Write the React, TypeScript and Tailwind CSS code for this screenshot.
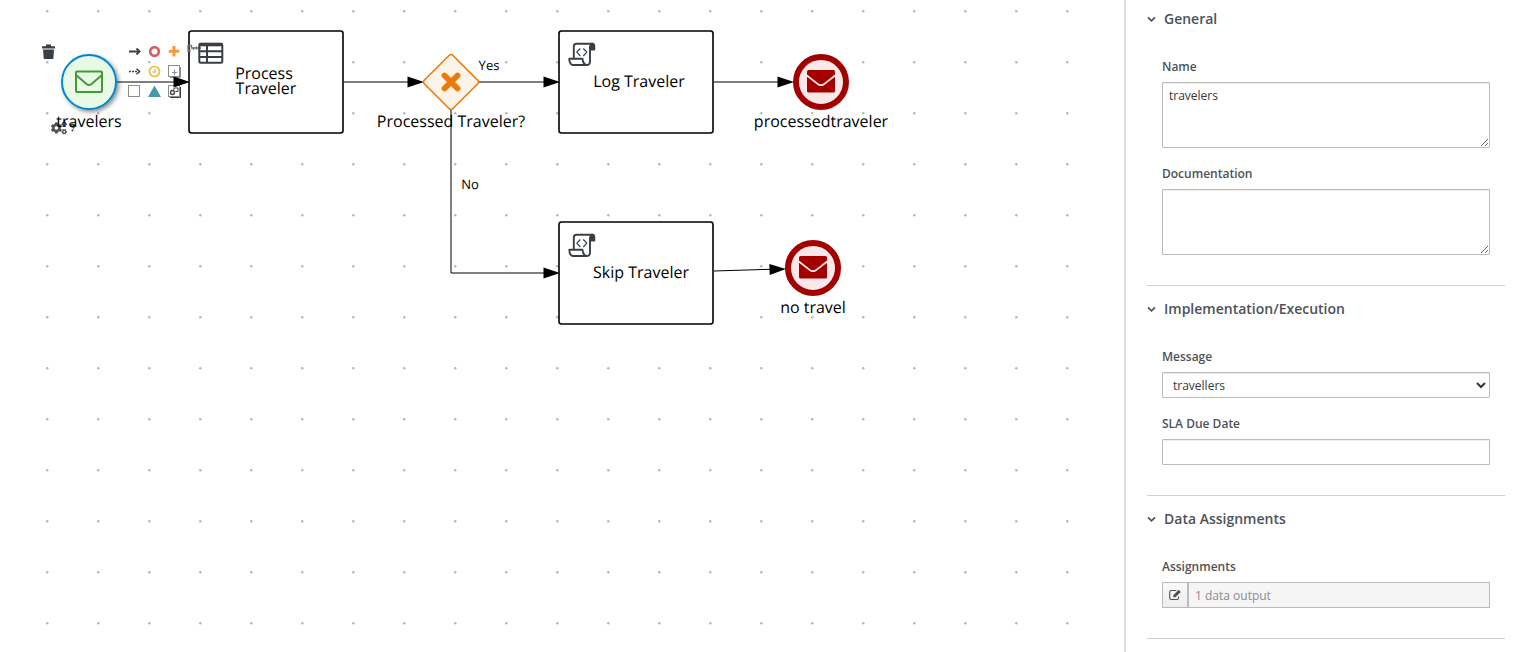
import { useId, type ReactNode } from "react";
import { FaCogs } from "react-icons/fa";

const label = "font-['Open_Sans',sans-serif]";

function Grid() {
  return (
    <>
      <defs>
        <pattern id="grid" x="21" y="-14" width="51" height="51" patternUnits="userSpaceOnUse">
          <circle cx="26.300" cy="25.300" r="1.200" fill="#b4b4b4" />
        </pattern>
        <filter id="shadow" x="-30%" y="-30%" width="170%" height="170%">
          <feDropShadow dx="2" dy="2" stdDeviation="2" floodColor="#000" floodOpacity="0.45" />
        </filter>
      </defs>
      <rect width="1100" height="100%" fill="url(#grid)" />
    </>
  );
}

function Arrow({ x, y, angle = 0 }: { x: number; y: number; angle?: number }) {
  return <path d="M0 0L-16.500 -5.500V5.500Z" transform={`translate(${x} ${y}) rotate(${angle})`} />;
}

function Task({ x, y, children }: { x: number; y: number; children: ReactNode }) {
  return (
    <g transform={`translate(${x} ${y})`}>
      <rect width="154" height="102" rx="2.500" fill="#fff" stroke="#000" strokeWidth="1.600" />
      {children}
    </g>
  );
}

function ScriptIcon() {
  return (
    <g fill="none" stroke="#393f44" strokeWidth="1.900" strokeLinejoin="round">
      <path d="M14.800 27.500V15.500Q14.800 12.700 17.500 12.700H34" />
      <path d="M31 15V30.500Q31 34 27.500 34H13.500Q10.300 33 10.300 27.800H23.500Q24 33 27.500 34" />
      <path d="M31.500 18.500V14.500Q31.500 12.700 33 12.700Q35.300 12.700 35.300 15V18.500Z" fill="#393f44" />
      <path d="M21.300 17.500L17.800 21.200L21.300 25M24.300 17.500L27.800 21.200L24.300 25" strokeWidth="1.200" />
    </g>
  );
}

function TableIcon() {
  return (
    <g fill="none" stroke="#393f44" strokeWidth="2">
      <rect x="10.300" y="12.700" width="23" height="19" rx="1.500" />
      <path d="M10 13.600H33.500" strokeWidth="3.400" />
      <path d="M10 20.200H33.500M10 26H33.500M18 14V32" />
    </g>
  );
}

function EndEvent({ x, y, name }: { x: number; y: number; name: string }) {
  return (
    <g transform={`translate(${x} ${y})`}>
      <circle r="25" fill="#fbe8e8" stroke="#a30000" strokeWidth="6" />
      <path d="M-14 -10.500Q-14 -12 -12.500 -12H12.500Q14 -12 14 -10.500V-7.500L2.500 1.500Q0 3 -2.500 1.500L-14 -7.500Z" fill="#a30000" />
      <path d="M-14 -5.300L-3 3.200Q0 5 3 3.200L14 -5.300V9Q14 10.500 12.500 10.500H-12.500Q-14 10.500 -14 9Z" fill="#a30000" />
      <text y="45" textAnchor="middle">{name}</text>
    </g>
  );
}

function ContextTools() {
  return (
    <g>
      <g fill="#393f44">
        <path d="M42 46.200H46V44.500H51V46.200H55V48.600H42Z" />
        <path d="M43 49.600H54L53.300 59H43.800Z" />
      </g>
      <g fill="#fff">
        <rect x="126" y="43" width="16" height="16" />
        <rect x="146" y="43" width="16" height="16" />
        <rect x="166" y="43" width="16" height="16" />
        <rect x="126" y="64" width="16" height="16" />
        <rect x="146" y="64" width="16" height="16" />
      </g>
      <g fill="none" stroke="#393f44" strokeWidth="2">
        <path d="M129 51.500H139" />
        <path d="M136.500 48.500L139.600 51.500L136.500 54.500" strokeWidth="1.800" />
        <path d="M129 71.500H138" strokeDasharray="2 1" strokeWidth="1.500" />
        <path d="M136.500 68.800L139.600 71.500L136.500 74.200" strokeWidth="1.500" />
      </g>
      <circle cx="154.500" cy="51.500" r="4.300" fill="#fff" stroke="#d3605f" strokeWidth="2.700" />
      <path d="M174 46V56.500M168.800 51.200H179.300" stroke="#f29a3c" strokeWidth="3" />
      <g fill="none" stroke="#f0ba3e" strokeWidth="1.700">
        <circle cx="154.500" cy="71.500" r="5" />
        <path d="M155 68.500V72H152.500" strokeWidth="1.300" />
      </g>
      <path d="M154.500 85.500L161 97H148Z" fill="#439ca4" />
      <g fill="#fff" stroke="#8b8d8f" strokeWidth="1">
        <rect x="128.500" y="85.500" width="11" height="11" />
        <rect x="168.500" y="65.500" width="11" height="11" />
        <rect x="168.500" y="85.500" width="11" height="11" />
        <path d="M180.500 67V77.500H170M174.500 70V75M172 72.500H177" fill="none" />
      </g>
      <g fill="none" stroke="#393f44">
        <path d="M180.500 87V97.500H170" />
        <circle cx="172.500" cy="92.500" r="2" strokeWidth="1.300" />
        <path d="M173 89.500Q175 87 178 88V91.500H175.500" />
      </g>
      <FaCogs x="51" y="120" width="16" height="15" color="#4d5258" />
      <path d="M70.500 125.500Q72.500 123.500 74.300 125.300Q74.800 127 72.800 128.300M72.500 129.500V131.300" fill="none" stroke="#393f44" strokeWidth="1.800" />
    </g>
  );
}

function Diagram() {
  return (
    <svg className={`h-full w-full text-[16px] ${label}`} textRendering="geometricPrecision" role="img" aria-label="Traveler process">
      <Grid />
      <ContextTools />

      <Task x={189} y={31}>
        <path d="M-1 21V14.500H2.500V17H12M-0.500 19.500H2M4.500 16V19M7.500 15.500V18.500" fill="none" stroke="#72767b" strokeWidth="1.300" />
        <TableIcon />
        <text x="75" y="48" textAnchor="middle">Process</text>
        <text x="77" y="63" textAnchor="middle">Traveler</text>
      </Task>
      <Task x={559} y={31}>
        <ScriptIcon />
        <text x="80" y="56" textAnchor="middle">Log Traveler</text>
      </Task>
      <Task x={559} y={222}>
        <ScriptIcon />
        <text x="82" y="56" textAnchor="middle">Skip Traveler</text>
      </Task>

      <g fill="none" stroke="#000" strokeWidth="1">
        <path d="M117 82H175M344 82H408M479 82H544M714 82H778M451 110V273H544M714 271L770 269.300" />
      </g>
      <Arrow x={190} y={82} />
      <Arrow x={424} y={82} />
      <Arrow x={560} y={82} />
      <Arrow x={794} y={82} />
      <Arrow x={560} y={273} />
      <Arrow x={786} y={269} angle={-2} />

      <circle cx="89" cy="82" r="27" fill="#e8fae6" stroke="#0088ce" strokeWidth="2" filter="url(#shadow)" />
      <g fill="none" stroke="#3f9c35" strokeWidth="2" strokeLinejoin="round">
        <rect x="76" y="71.500" width="26" height="20.500" rx="1" />
        <path d="M76 75L86.500 84Q89 86 91.500 84L102 75" />
      </g>
      <text x="89" y="127" textAnchor="middle">travelers</text>

      <path d="M449 55.500Q451 53.500 453 55.500L477.500 80Q479.500 82 477.500 84L453 108.500Q451 110.500 449 108.500L424.500 84Q422.500 82 424.500 80Z" fill="#fef3e9" stroke="#ec7a08" strokeWidth="1.600" />
      <path d="M444.500 75.500L457.500 88.500M457.500 75.500L444.500 88.500" stroke="#ec7a08" strokeWidth="5.800" strokeLinecap="round" />
      <text x="451" y="127" textAnchor="middle">Processed Traveler?</text>
      <text x="489" y="70" textAnchor="middle" className="text-[13px]">Yes</text>
      <text x="470" y="189" textAnchor="middle" className="text-[13px]">No</text>

      <EndEvent x={821} y={82} name="processedtraveler" />
      <EndEvent x={813} y={268} name="no travel" />
    </svg>
  );
}

function Chevron() {
  return (
    <svg viewBox="0 0 9 10" className="h-2.5 w-[9px]" fill="none" stroke="currentColor" strokeWidth="1.700" aria-hidden="true">
      <path d="M1 3.300L4.500 6.800L8 3.300" />
    </svg>
  );
}

function EditIcon() {
  return (
    <svg viewBox="0 0 12 12" className="size-3" fill="none" stroke="currentColor" aria-hidden="true">
      <path d="M7.500 1.500H2.200Q0.700 1.500 0.700 3V9Q0.700 10.500 2.200 10.500H8Q9.500 10.500 9.500 9V7.500" strokeWidth="1.100" />
      <path d="M4.300 8.300V6.200L9.700 0.800L11.800 2.900L6.400 8.300Z" fill="currentColor" stroke="none" />
    </svg>
  );
}

function Section({ title, children }: { title: string; children: ReactNode }) {
  return (
    <section className="border-b border-[#d1d1d1] pb-[30px]">
      <h2>
        <button type="button" className="mt-[13px] flex h-5 items-center gap-2 text-[14px] leading-5 font-semibold">
          <Chevron />
          {title}
        </button>
      </h2>
      <div className="mt-[27px] flex flex-col gap-[15px] px-[15px]">{children}</div>
    </section>
  );
}

function Field({ name, children }: { name: string; children: (id: string) => ReactNode }) {
  const id = useId();
  return (
    <div className="flex flex-col gap-1">
      <label htmlFor={id} className="text-[12px] leading-[22px] font-semibold">{name}</label>
      {children(id)}
    </div>
  );
}

const control = "block w-full rounded-[1px] border border-[#bbb] bg-white text-[12px] text-[#363636] shadow-[inset_0_1px_1px_rgba(3,3,3,0.075)] outline-none";

export default function App() {
  return (
    <div className="flex h-screen overflow-hidden bg-white font-['Open_Sans',sans-serif] text-[#4d5258]">
      <main className="min-w-0 flex-1">
        <Diagram />
      </main>
      <aside className="w-[398px] shrink-0 overflow-hidden border-l-2 border-[#ddd] pr-[17px] pl-[21px]">
        <div className="-mt-1">
          <Section title="General">
            <Field name="Name">
              {(id) => <textarea id={id} defaultValue="travelers" className={`${control} h-[66px] px-1.5 py-1 leading-[18px]`} />}
            </Field>
            <Field name="Documentation">
              {(id) => <textarea id={id} className={`${control} h-[66px] px-1.5 py-1 leading-[18px]`} />}
            </Field>
          </Section>
          <Section title="Implementation/Execution">
            <Field name="Message">
              {(id) => (
                <select id={id} className={`${control} h-[26px] px-1.5`}>
                  <option>travellers</option>
                </select>
              )}
            </Field>
            <Field name="SLA Due Date">
              {(id) => <input id={id} type="text" className={`${control} h-[26px] px-1.5`} />}
            </Field>
          </Section>
          <Section title="Data Assignments">
            <Field name="Assignments">
              {(id) => (
                <div className="flex">
                  <button type="button" aria-label="Edit assignments" className="flex h-[26px] w-[26px] shrink-0 items-center justify-center border border-[#bbb] bg-linear-to-b from-[#fafafa] to-[#ededed]">
                    <EditIcon />
                  </button>
                  <input id={id} type="text" readOnly value="1 data output" className="h-[26px] min-w-0 flex-1 border border-[#bbb] bg-[#f5f5f5] px-1.5 text-[12px] text-[#8b8d8f] outline-none" />
                </div>
              )}
            </Field>
          </Section>
        </div>
      </aside>
    </div>
  );
}
